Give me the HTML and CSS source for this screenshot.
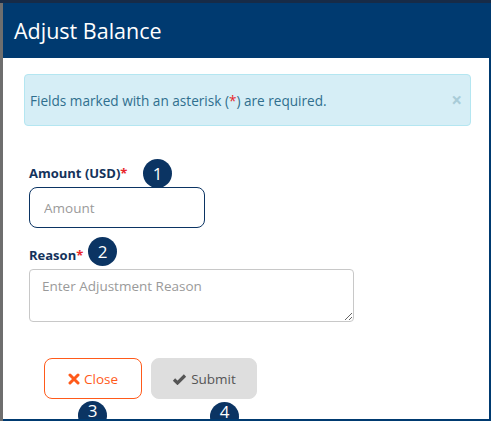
FILE: index.html
```html
<!DOCTYPE html>
<html>
<head>
<meta charset="utf-8">
<link rel="stylesheet" href="styles.css">
</head>
<body>
<div class="page">
  <div class="modal">
    <div class="modal-header">
      <h4 class="modal-title">Adjust Balance</h4>
    </div>
    <div class="modal-body">
      <div class="alert">
        <span>Fields marked with an asterisk (<span class="req">*</span>) are required.</span>
        <span class="alert-close">&times;</span>
      </div>
      <div class="form">
        <div class="field">
          <label class="label">Amount (USD)<span class="req">*</span><span class="badge badge-1">1</span></label>
          <input class="input" type="text" placeholder="Amount">
        </div>
        <div class="field field-reason">
          <label class="label">Reason<span class="req">*</span><span class="badge badge-2">2</span></label>
          <textarea class="textarea" placeholder="Enter Adjustment Reason"></textarea>
        </div>
        <div class="actions">
          <button class="btn btn-close" type="button">
            <svg class="icon" width="12" height="12" viewBox="0 0 12 12"><path d="M2 2 L10 10 M10 2 L2 10" stroke="currentColor" stroke-width="3" stroke-linecap="round"/></svg>
            Close
            <span class="badge badge-low badge-3">3</span>
          </button>
          <button class="btn btn-submit" type="button">
            <svg class="icon" width="15" height="12" viewBox="0 0 15 12"><path d="M2 6.5 L5.5 10 L13 2.5" fill="none" stroke="currentColor" stroke-width="3.2" stroke-linecap="butt" stroke-linejoin="miter"/></svg>
            Submit
            <span class="badge badge-low badge-4">4</span>
          </button>
        </div>
      </div>
    </div>
  </div>
</div>
</body>
</html>
```
FILE: styles.css
```css
html, body {
  margin: 0;
  padding: 0;
}
body {
  width: 491px;
  height: 421px;
  overflow: hidden;
  background: #6e6e6e;
  font-family: "Open Sans", "DejaVu Sans", sans-serif;
}
.page {
  border-top: 3px solid #172b47;
  padding-left: 3px;
  height: 418px;
  box-sizing: border-box;
}
.modal {
  background: #fff;
  height: 418px;
  box-sizing: border-box;
  border-right: 2px solid #003a70;
  border-bottom: 2px solid #003a70;
  overflow: hidden;
}
.modal-header {
  background: #003a70;
  height: 55px;
  display: flex;
  align-items: center;
  padding-left: 11px;
}
.modal-title {
  margin: 0;
  color: #fff;
  font-weight: 400;
  font-size: 21.5px;
  line-height: 1;
  padding-top: 1px;
}
.modal-body {
  padding: 16px 18px 0 21px;
}
.alert {
  height: 52px;
  box-sizing: border-box;
  background: #d6eef6;
  border: 1px solid #b4e6f1;
  border-radius: 4px;
  display: flex;
  align-items: center;
  justify-content: space-between;
  padding: 0 8px 0 5px;
  color: #2f6f8e;
  font-size: 13.6px;
}
.req {
  color: #e8262b;
}
.alert-close {
  color: #a9ccd8;
  font-size: 19px;
  font-weight: 700;
  line-height: 1;
}
.form {
  padding-left: 5px;
}
.field {
  display: flex;
  flex-direction: column;
  align-items: flex-start;
}
.label {
  position: relative;
  margin-top: 39px;
  font-size: 13px;
  font-weight: 700;
  color: #14335b;
  line-height: 16px;
  height: 16px;
}
.field-reason .label {
  margin-top: 19px;
}
.badge {
  position: absolute;
  width: 29px;
  height: 29px;
  box-sizing: border-box;
  border-radius: 50%;
  background: #0b3463;
  color: #fff;
  font-size: 17px;
  font-weight: 400;
  line-height: 29px;
  text-align: center;
}
.badge-low {
  line-height: 14px;
  padding-top: 3px;
}
.badge-1 {
  left: 114px;
  top: -6px;
}
.badge-2 {
  left: 59px;
  top: -10px;
}
.input {
  margin-top: 6px;
  width: 176px;
  height: 41px;
  box-sizing: border-box;
  border: 1px solid #0b3463;
  border-radius: 8px;
  padding: 0 14px;
  font-family: inherit;
  font-size: 13.5px;
  color: #333;
  outline: none;
}
.input::placeholder,
.textarea::placeholder {
  color: #9a9a9a;
}
.textarea {
  margin-top: 6px;
  width: 325px;
  height: 53px;
  box-sizing: border-box;
  border: 1px solid #c8c8c8;
  border-radius: 4px;
  padding: 7px 12px;
  font-family: inherit;
  font-size: 13.5px;
  resize: vertical;
  outline: none;
}
.actions {
  display: flex;
  gap: 9px;
  margin-top: 36px;
  padding-left: 15px;
}
.btn {
  position: relative;
  height: 41px;
  box-sizing: border-box;
  border-radius: 8px;
  display: flex;
  align-items: center;
  justify-content: center;
  gap: 4px;
  font-family: inherit;
  font-size: 13.5px;
  padding: 0;
}
.btn-close {
  width: 98px;
  background: #fff;
  border: 1px solid #ff5a1a;
  color: #ff5a1a;
}
.btn-submit {
  width: 106px;
  background: #dedede;
  border: 1px solid #dedede;
  color: #555;
}
.badge-3 {
  left: 33px;
  top: 42px;
}
.badge-4 {
  left: 58px;
  top: 43px;
}
```
